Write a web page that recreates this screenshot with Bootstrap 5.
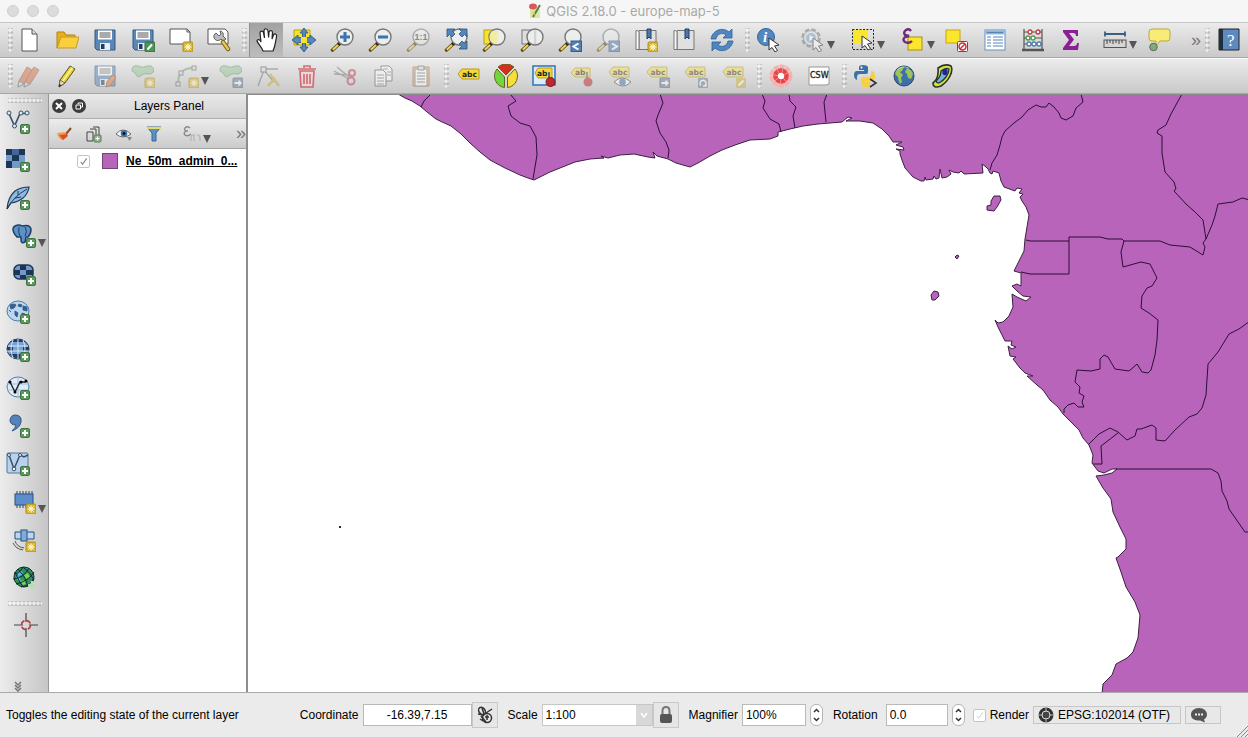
<!DOCTYPE html>
<html lang="en">
<head>
<meta charset="utf-8">
<meta name="viewport" content="width=device-width, initial-scale=1">
<title>QGIS 2.18.0 - europe-map-5</title>
<link rel="stylesheet" href="https://cdn.jsdelivr.net/npm/bootstrap@5.3.0/dist/css/bootstrap.min.css">
<style>
body{font:12px/16px "Liberation Sans",Arial,sans-serif;color:#000;background:#ebebeb}
.titlebar{height:22px;background:#f6f6f6;color:#a9a9a9;font:13px/22px Inter,sans-serif}
.lights{left:7px;top:5px;gap:8px}
.lights i{width:12px;height:12px;border-radius:50%;background:#dcdcdc;border:1px solid #cfcfcf}
.toolrow{height:36px;padding-left:10px;background:linear-gradient(#ebebeb,#c9c9c9);border-top:1px solid #fafafa;border-bottom:1px solid #a6a6a6;position:relative}
.toolrow.first{border-top-color:#c6c6c6}
.tool{width:38px;height:34px;padding:0;border:0;border-radius:0;flex:none;display:flex;align-items:center;justify-content:center;color:#555}
.tool svg{width:24px;height:24px;flex:none}
.tool.drop{width:50px;padding-left:13px;justify-content:flex-start}
.tool.drop::after{content:"";border:4px solid transparent;border-top:8px solid #555;border-bottom:0;margin:10px 0 0 2px}
.tool.held{width:34px;margin:0 2px;background:linear-gradient(#a2a2a2,#bdbdbd);border-left:1px solid #8f8f8f}
.tool.off svg{opacity:.5}
.tool.dim svg{opacity:.75}
.tool.more{width:23px;font-size:18px;color:#777;justify-content:flex-end}
.grip{width:9px;height:24px;flex:none;opacity:.6;background:radial-gradient(circle,#fff 1px,transparent 2px) 0 0/4px 5px,radial-gradient(circle,#aaa 1px,transparent 2px) 2px 2px/4px 5px;background-clip:content-box;padding-left:4px}
.grip.lead-in{position:absolute;left:4px}
.side{width:49px;background:linear-gradient(90deg,#ececec,#c6c6c6);border-right:1px solid #989898}
.side .grip{width:34px;height:5px;padding:0;margin:4px 0 0 8px}
.side .tool{height:38px;width:48px;padding-left:6px;justify-content:flex-start}
.side .tool.inset{padding-left:12px}
.side .tool.capture{padding-left:14px}
.side .tool.overflow-more{height:14px;margin-top:auto}
.side .tool.overflow-more svg{height:14px}
.side .drop::after{margin-top:14px}
.layers{width:199px;border-right:2px solid #8d8d8d}
.panelhead{height:25px;padding-left:3px;gap:6px;background:linear-gradient(#e9e9e9,#d2d2d2);border-bottom:1px solid #b0b0b0}
.roundbtn{width:14px;height:14px;padding:0;border:0;border-radius:50%;background:#3c3c3c;display:flex;align-items:center;justify-content:center;flex:none}
.paneltools{height:30px;background:linear-gradient(#ececec,#cbcbcb);border-bottom:1px solid #a4a4a4}
.paneltools .tool{width:30px;height:28px}
.paneltools .tool svg{width:18px;height:18px}
.paneltools .tool.drop{width:44px;padding-left:14px}
.tick{appearance:none;width:13px;height:13px;margin:0;border:1px solid #c4c4c4;border-radius:2px;background:#fff;flex:none}
.tick:checked{background:#fff url("data:image/svg+xml,%3Csvg xmlns='http://www.w3.org/2000/svg' viewBox='0 0 12 12'%3E%3Cpath d='M3 6.5 5 9 9.5 2.5' fill='none' stroke='%23888' stroke-width='1.3'/%3E%3C/svg%3E")}
.tick.faint:checked{background-image:url("data:image/svg+xml,%3Csvg xmlns='http://www.w3.org/2000/svg' viewBox='0 0 12 12'%3E%3Cpath d='M3 6.5 5 9 9.5 2.5' fill='none' stroke='%23ccc' stroke-width='1'/%3E%3C/svg%3E")}
.swatch{width:16px;height:16px;background:#b864bb;border:1px solid #6b4a6d;flex:none}
.layername{font-weight:700;text-decoration:underline;color:#000}
.map{background:#fff;border-top:1px solid #8d8d8d}
.status{height:45px;border-top:1px solid #a9a9a9;background:#ebebeb;padding:0 27px 0 6px}
.status .gap-before{margin-left:10px}
.field{height:22px;border:1px solid #b9b9b9;background:#fff;padding:0 3px;font-size:12px;border-radius:0;color:#000;flex:none}
.coord{width:109px}
.mag{width:64px}
.rot{width:62px}
.boxbtn{width:26px;height:26px;border:1px solid #c9c9c9;border-radius:0;padding:0;background:#e6e6e6;flex:none;display:flex;align-items:center;justify-content:center}
.scale{width:111px;appearance:none;border-color:#c6c6c6;background:#fff url("data:image/svg+xml,%3Csvg xmlns='http://www.w3.org/2000/svg' viewBox='0 0 16 20'%3E%3Cpath d='M0 0h16v20H0z' fill='%23d8d8d8'/%3E%3Cpath d='m5 8 3 4 3-4' fill='none' stroke='white' stroke-width='1.5'/%3E%3C/svg%3E") right/16px 20px no-repeat}
.step{width:13px;height:22px;border:1px solid #b5b5b5;border-radius:6px;background:#fff;padding:0;flex:none;display:flex;align-items:center;justify-content:center}
.chip{height:18px;border:1px solid #c6c6c6;border-radius:0;background:#e8e8e8;padding:0 4px;font-size:12px;line-height:16px;color:#000;flex:none}
.chip.crs{width:148px}
.chip.msg{width:36px}
.coast{fill:#b864bb;stroke:#3d1f45;stroke-width:1;stroke-linejoin:round}
.bord{fill:none;stroke:#2c0f35;stroke-width:1;stroke-linejoin:round}
.resize{right:0;bottom:0}
</style>
<script src="https://cdn.jsdelivr.net/npm/bootstrap@5.3.0/dist/js/bootstrap.bundle.min.js"></script>
</head>
<body class="vh-100 d-flex flex-column overflow-hidden">

<svg class="d-none" aria-hidden="true">
<defs>
<g id="b-plus"><rect x="14.500" y="14.500" width="9" height="9" rx="1.500" fill="#5a9a5c" stroke="#3d7440"/><path d="M19 16v6M16 19h6" stroke="#fff" stroke-width="2"/></g>
<g id="b-star"><rect x="14" y="14" width="10" height="10" rx="1.500" fill="#dcb62c" stroke="#a98a1c"/><path d="M19 15.500v7M15.500 19h7M16.500 16.500l5 5M21.500 16.500l-5 5" stroke="#fff" stroke-width="1"/><circle cx="19" cy="19" r="1.800" fill="#fff4b0"/></g>
<g id="b-arrow"><rect x="14" y="14" width="10" height="10" rx="1" fill="#6d8296" stroke="#4d5c6a"/><path d="M15.500 18h4v-2.500L23 19l-3.500 3.500V20h-4z" fill="#fff"/></g>
<g id="lens"><path d="M9 16 2.500 22" stroke="#5d4a16" stroke-width="3.600" stroke-linecap="round"/><path d="M8 17 2.800 21.800" stroke="#f3d354" stroke-width="2"/><path d="m8.500 16.500 2-2" stroke="#222" stroke-width="3.500"/><circle cx="15" cy="9" r="8" fill="#eef0f0" fill-opacity=".88" stroke="#777" stroke-width="1.400"/></g>
<g id="disk"><path d="M2 2h20v20H4l-2-2z" fill="#5b87b8" stroke="#33587f"/><rect x="5" y="2.500" width="14" height="9" fill="#fff"/><path d="M6.500 5h11M6.500 7h11M6.500 9h11" stroke="#555"/><rect x="7" y="15" width="10" height="7" fill="#e8eef3"/><rect x="8" y="16" width="3.500" height="5" fill="#223d5c"/></g>
<g id="pen"><path d="M5 16 15 2l5 3L10 19l-6 4z" fill="#e3cf38" stroke="#5b5523"/><path d="M7.500 17.500 17.500 3.500" stroke="#fff48a" stroke-width="1.500"/><path d="m5 16 5 3-6 4z" fill="#ead7b0" stroke="#555" stroke-width=".8"/><path d="m4.500 20 2 1.200L4 23z" fill="#222"/></g>
<g id="cursor"><path d="M12 10v12l3-2.500 3 4.500 2.500-1.500-3-4.500 4.500-1z" fill="#fff" stroke="#333"/></g>
<g id="blob"><path d="M1 6c0-5 5-5 9-3 3 1 6-2 10-1 4 2 3 8-1 8-4 0-6-1-8 1-4 3-6 1-6-1-1-3-4-1-4-4z" fill="#98c79b" stroke="#5f9665"/></g>
<g id="tag"><path d="M2 12 6 7h17v10H6z" fill="#f5d934" stroke="#b79a20"/><text x="6" y="15" font-family="DejaVu Sans" font-size="7.500" font-weight="700" fill="#222">abc</text></g>
<g id="tag-s"><path d="M1 8 5 3h16v10H5z" fill="#f0dc55" stroke="#b79a20"/><text x="4.500" y="11" font-family="DejaVu Sans" font-size="7.500" font-weight="700" fill="#333">abc</text></g>
<g id="vee"><path d="M3 4.500 8.500 17 14 4.500h7" fill="none" stroke="#38536f" stroke-width="1.700"/><g fill="#dce8f2" stroke="#38536f"><circle cx="3" cy="4" r="2"/><circle cx="8.500" cy="17" r="2"/><circle cx="15" cy="4" r="2"/><circle cx="21" cy="4" r="2"/></g></g>

<symbol id="new" viewBox="0 0 24 24"><path d="M5 1h10l5 5v17H5z" fill="#fff" stroke="#555"/><path d="M15 1v5h5" fill="#ddd" stroke="#555"/></symbol>
<symbol id="open" viewBox="0 0 24 24"><path d="M2 20V4h7l2 3h9v3H6z" fill="#e8ae1e" stroke="#b28316"/><path d="M2 20 6 9h18l-3 11z" fill="#f8cf3d" stroke="#c89a20"/></symbol>
<symbol id="save" viewBox="0 0 24 24"><use href="#disk"/></symbol>
<symbol id="saveas" viewBox="0 0 24 24"><use href="#disk"/><rect x="14" y="14" width="10" height="10" rx="1.500" fill="#4f9557" stroke="#2d6535"/><path d="m16.500 21.500 4.500-5" stroke="#fff" stroke-width="2"/></symbol>
<symbol id="composer" viewBox="0 0 24 24"><path d="M1 1h17l3 3v12H1z" fill="#fff" stroke="#555"/><path d="M18 1v3h3" fill="none" stroke="#555"/><use href="#b-star"/></symbol>
<symbol id="manager" viewBox="0 0 24 24"><path d="M1 1h17l3 3v12H1z" fill="#fff" stroke="#555"/><path d="M9 5a4 4 0 1 0 5 6l2 2 3-2-3-3c1-3-1-5-3-5l1 3-2 2z" fill="#bbb" stroke="#555" stroke-width=".9"/><path d="m16 14 5 7" stroke="#77601a" stroke-width="4.500" stroke-linecap="round"/><path d="m16 14 5 7" stroke="#e8c84c" stroke-width="2.500" stroke-linecap="round"/></symbol>
<symbol id="hand" viewBox="0 0 24 24"><path d="M8 23c-1-4-5-7-6-10 0-2 3-2 4 1L5 5c0-2 3-3 3.500 0l1 5L9 3c0-3 3.500-3 4 0l.6 6.500L14 4c.5-2 3.500-2 3.500.5L17 11l1.500-4c1-2 3.500-1 3 1.500-1 5-1 9-3.500 14.500z" fill="#fff" stroke="#222" stroke-width="1.200"/></symbol>
<symbol id="pansel" viewBox="0 0 24 24"><path d="M2 2h16v15H2z" fill="#f8e32c" stroke="#b9a210"/><path d="M12 0 8 5h2.500v4.500H6V7L0 12l6 5v-2.500h4.500V19H8l4 5 4-5h-2.500v-4.500H18V17l6-5-6-5v2.500h-4.500V5H16z" fill="#5788bd" stroke="#29507f" stroke-width=".8"/><rect x="9" y="9" width="6" height="6" fill="#f8e32c"/></symbol>
<symbol id="zin" viewBox="0 0 24 24"><use href="#lens"/><path d="M15 4v10M10 9h10" stroke="#3f73ae" stroke-width="3"/></symbol>
<symbol id="zout" viewBox="0 0 24 24"><use href="#lens"/><path d="M10 9h10" stroke="#3f73ae" stroke-width="3"/></symbol>
<symbol id="zone" viewBox="0 0 24 24"><use href="#lens"/><text x="8.500" y="12" font-family="Liberation Sans" font-size="9" font-weight="700" fill="#333">1:1</text></symbol>
<symbol id="zfull" viewBox="0 0 24 24"><use href="#lens"/><path d="M3 1h8L8.500 3.500 11 6 8 9 5.500 6.500 3 9zM23 1v8l-2.500-2.500L18 9l-3-3 2.500-2.500L15 1zM23 21h-8l2.500-2.500L15 16l3-3 2.500 2.500L23 13z" fill="#5585b9" stroke="#29507f" stroke-width=".8"/></symbol>
<symbol id="zsel" viewBox="0 0 24 24"><rect x="2" y="2" width="14" height="14" fill="#f8e32c" stroke="#b9a210"/><use href="#lens"/><path d="M10 3h5v13h-3c-5-2-6-9-2-13z" fill="#f2eca0"/></symbol>
<symbol id="zlayer" viewBox="0 0 24 24"><rect x="2" y="2" width="14" height="14" fill="#ddd" stroke="#777"/><use href="#lens"/><path d="M15 3v13" stroke="#bbb"/></symbol>
<symbol id="zlast" viewBox="0 0 24 24"><use href="#lens"/><rect x="13" y="13" width="10.500" height="10.500" fill="#5580b4" stroke="#365d8b"/><path d="m20.500 15.500-5 3 5 3" fill="none" stroke="#fff" stroke-width="2"/></symbol>
<symbol id="znext" viewBox="0 0 24 24"><use href="#lens"/><rect x="13" y="13" width="10.500" height="10.500" fill="#5580b4" stroke="#365d8b"/><path d="m16 15.500 5 3-5 3" fill="none" stroke="#fff" stroke-width="2"/></symbol>
<symbol id="bm" viewBox="0 0 24 24"><path d="M5 2.500h17v19H5z" fill="#e0e0e0" stroke="#777"/><path d="M2 2.500c3 0 3 2 3 3v16H2z" fill="#f8f8f8" stroke="#777"/><path d="M13 1h4v10l-2-2-2 2z" fill="#4c77ab" stroke="#223f65"/></symbol>
<symbol id="bmnew" viewBox="0 0 24 24"><use href="#bm"/><use href="#b-star"/></symbol>
<symbol id="refresh" viewBox="0 0 24 24"><path d="M1 11C2 3 12-2 19 4l3-3v9h-9l3-3C12 4 7 6 6 11zM23 13c-1 8-11 13-18 7l-3 3v-9h9l-3 3c4 3 9 1 10-4z" fill="#4f86c0" stroke="#2f6298" stroke-width=".8"/></symbol>
<symbol id="info" viewBox="0 0 24 24"><circle cx="9" cy="9" r="8.500" fill="#5287bf" stroke="#36669b"/><text x="6" y="14" font-family="Liberation Serif" font-size="15" font-style="italic" font-weight="700" fill="#fff">i</text><use href="#cursor"/></symbol>
<symbol id="action" viewBox="0 0 24 24"><circle cx="10" cy="10" r="8.500" fill="none" stroke="#777" stroke-width="2.500" stroke-dasharray="4.500 2.200"/><circle cx="10" cy="10" r="7.500" fill="#d8e2eb" stroke="#777"/><circle cx="10" cy="10" r="5" fill="#7da3c8"/><path d="m8.500 7 5 3-5 3z" fill="#fff"/><use href="#cursor"/></symbol>
<symbol id="select" viewBox="0 0 24 24"><rect x="2" y="2" width="15" height="14" fill="#fbe62e"/><rect x="1.500" y="1.500" width="21" height="20" fill="none" stroke="#222" stroke-dasharray="2 1.500"/><use href="#cursor" x="-1" y="-2"/></symbol>
<symbol id="expr" viewBox="0 0 24 24"><rect x="7" y="9" width="14" height="13" fill="#fbe62e" stroke="#aa910c"/><path d="M10 3Q8 0 5 2 2 4 4 7l4 1-4 1q-3 3 0 5 4 2 7-1" fill="none" stroke="#6b2b78" stroke-width="2.400"/></symbol>
<symbol id="desel" viewBox="0 0 24 24"><rect x="1" y="2" width="14" height="13" fill="#fbe62e" stroke="#d0a10c"/><rect x="12.500" y="13.500" width="10" height="10" rx="1" fill="#fff" stroke="#c3262c"/><circle cx="17.500" cy="18.500" r="3.500" fill="none" stroke="#d22a30" stroke-width="1.500"/><path d="m15 21 5-5" stroke="#d22a30" stroke-width="1.500"/></symbol>
<symbol id="table" viewBox="0 0 24 24"><rect x="2" y="2" width="20" height="20" fill="#fff" stroke="#5e92ca"/><path d="M2.500 2.500h19v4h-19z" fill="#8db5df"/><path d="M4 9h4M10 9h10M4 12h4M10 12h10M4 15h4M10 15h10M4 18h4M10 18h10M4 4.500h16" stroke="#5683b3" stroke-width="1.200"/></symbol>
<symbol id="abacus" viewBox="0 0 24 24"><path d="M3 1v21M21 1v21M3 4h18M3 10h18M3 16h18" stroke="#555" stroke-width="1.200"/><path d="M1 22h22" stroke="#555" stroke-width="2.500"/><g fill="#fff" stroke-width="1.300"><g stroke="#c4383c"><circle cx="9" cy="4" r="2"/><circle cx="17" cy="4" r="2"/></g><g stroke="#4a9b50"><circle cx="7" cy="10" r="2"/><circle cx="12" cy="10" r="2"/></g><g stroke="#4b7bb0"><circle cx="8" cy="16" r="2"/><circle cx="13" cy="16" r="2"/><circle cx="18" cy="16" r="2"/></g></g></symbol>
<symbol id="sigma" viewBox="0 0 24 24"><path d="M4 2h15v6h-2c0-2-1-3-3-3h-4l5 6.500L10 18h5c2 0 3-1 3-3h2l-1 7H4v-2l6-8-6-8z" fill="#8c1f95"/></symbol>
<symbol id="measure" viewBox="0 0 24 24"><path d="M2 6h20M2 3.500v5M22 3.500v5" stroke="#3b5f80" stroke-width="1.800"/><rect x="1" y="12" width="22" height="7.500" fill="#d5d5d5" stroke="#555"/><path d="M4 12v4M7 12v3M10 12v4M13 12v3M16 12v4M19 12v3" stroke="#444"/></symbol>
<symbol id="tip" viewBox="0 0 24 24"><path d="M5 1h16q2 0 2 3v6q0 3-3 3h-7l-4 5v-5H5q-3 0-3-3V4q0-3 3-3z" fill="#f8ec78" stroke="#bda73a"/><circle cx="6.500" cy="19" r="3.800" fill="#84a77d" stroke="#53774e"/></symbol>
<symbol id="help" viewBox="0 0 24 24"><path d="M2 1h20v21H2z" fill="#5d8bc0" stroke="#222"/><path d="M2 1h4v21H2z" fill="#1f2e40"/><text x="10" y="18" font-family="Liberation Serif" font-size="17" fill="#fff">?</text></symbol>

<symbol id="edits" viewBox="0 0 24 24"><g fill="#e0703a" stroke="#7a655b"><path d="M2 17 10 3l5 3L7 20l-6 3z"/><path d="M8 18 17 3l5 3-9 14-6 3z"/></g><path d="m2 17 5 3-6 3zM8 18l5 2-6 3z" fill="#ddd" stroke="#777"/></symbol>
<symbol id="pencil" viewBox="0 0 24 24"><use href="#pen"/></symbol>
<symbol id="saveedit" viewBox="0 0 24 24"><use href="#disk"/><path d="m14 18 5-7 4 2-5 8-5 2z" fill="#e8773c" stroke="#994a22"/></symbol>
<symbol id="addfeat" viewBox="0 0 24 24"><use href="#blob"/><use href="#b-star"/></symbol>
<symbol id="curve" viewBox="0 0 24 24"><path d="M3 20C3 9 8 4 18 4" fill="none" stroke="#6fa877" stroke-width="1.800"/><g fill="#ddd" stroke="#666"><rect x="1" y="18" width="4" height="4"/><rect x="4" y="7" width="4" height="4"/><rect x="17" y="2" width="4" height="4"/></g><use href="#b-star"/></symbol>
<symbol id="movefeat" viewBox="0 0 24 24"><use href="#blob"/><use href="#b-arrow"/></symbol>
<symbol id="node" viewBox="0 0 24 24"><path d="M7 6 1 22M7 5h14M7 6l10 12" stroke="#777" stroke-width="1.400"/><rect x="4" y="3" width="5" height="5" fill="#ddd" stroke="#555"/><path d="m11 22 7-8M13 10l9 12" stroke="#c8ac32" stroke-width="2.500"/></symbol>
<symbol id="trash" viewBox="0 0 24 24"><path d="M5 7h14l-1 16H6z" fill="#f3d6d7" stroke="#c9474e" stroke-width="1.600"/><path d="M3 5h18M9 4V2h6v2M9 10v10M12 10v10M15 10v10" fill="none" stroke="#c9474e" stroke-width="1.600"/></symbol>
<symbol id="cut" viewBox="0 0 24 24"><path d="m1 7 15 8M4 3l12 10M1 10l15 1" stroke="#777" stroke-width="1.400"/><circle cx="19" cy="9" r="3" fill="none" stroke="#bb3e53" stroke-width="2"/><circle cx="18" cy="17" r="3.500" fill="none" stroke="#bb3e53" stroke-width="2"/></symbol>
<symbol id="copy" viewBox="0 0 24 24"><path d="M10 2h8l3 3v12H10z" fill="#fff" stroke="#555"/><path d="M4 6h8l3 3v13H4z" fill="#fff" stroke="#555"/><path d="M6 11h7M6 14h7M6 17h7M6 20h7M12 5h5M16 8h4M16 11h4" stroke="#777"/></symbol>
<symbol id="paste" viewBox="0 0 24 24"><path d="M4 3h16v19H4z" fill="#d7bc8f" stroke="#b5651d"/><path d="M6 5h12v17H6z" fill="#fff" stroke="#777"/><path d="M9 2h6v4H9zM8 9h8M8 12h8M8 15h8M8 18h8" fill="#ddd" stroke="#666"/></symbol>
<symbol id="label" viewBox="0 0 24 24"><use href="#tag" y="-2"/></symbol>
<symbol id="pie" viewBox="0 0 24 24"><g stroke="#6b6220"><path d="M12 11 4 3a12 12 0 0 1 16 0z" fill="#d92c20"/><path d="M10.500 13v10.500A11.500 11.500 0 0 1 3 5z" fill="#6fd63b"/><path d="M13.500 13v10.500A11.500 11.500 0 0 0 21 5z" fill="#f6df36"/></g></symbol>
<symbol id="pinhl" viewBox="0 0 24 24"><rect x="1" y="2" width="22" height="19" fill="#dcecfa" stroke="#2d73b9" stroke-width="1.500"/><path d="m3 9 3-5h14v10H6z" fill="#f5d934" stroke="#b79a20"/><text x="5" y="12" font-family="DejaVu Sans" font-size="7.500" font-weight="700" fill="#222">ab</text><path d="M17 8v9" stroke="#666" stroke-width="2"/><circle cx="18.500" cy="18" r="4.500" fill="#bd2730" stroke="#7e1820"/></symbol>
<symbol id="pin" viewBox="0 0 24 24"><path d="M1 9 5 4h15v9H5z" fill="#f0dc55" stroke="#b79a20"/><text x="5" y="11" font-family="DejaVu Sans" font-size="7.500" font-weight="700" fill="#222">ab</text><path d="M17 8v9" stroke="#666" stroke-width="2"/><circle cx="18" cy="18" r="4.500" fill="#bd2730"/></symbol>
<symbol id="lshow" viewBox="0 0 24 24"><use href="#tag-s"/><path d="M6 18q8-8 17 0-8 8-17 0z" fill="#fff" stroke="#444"/><circle cx="14.500" cy="18" r="3.300" fill="#4a7aaa"/></symbol>
<symbol id="lmove" viewBox="0 0 24 24"><use href="#tag-s"/><use href="#b-arrow"/></symbol>
<symbol id="lrot" viewBox="0 0 24 24"><use href="#tag-s"/><rect x="14" y="14" width="10" height="10" rx="1" fill="#6d8296"/><path d="M17 21.500a3 3 0 1 1 4 0M22 19v3h-3" fill="none" stroke="#fff" stroke-width="1.400"/></symbol>
<symbol id="ledit" viewBox="0 0 24 24"><use href="#tag-s"/><rect x="14" y="14" width="10" height="10" rx="1" fill="#d0b440"/><path d="m16.500 21.500 5-5" stroke="#fff" stroke-width="2"/></symbol>
<symbol id="flower" viewBox="0 0 24 24"><circle cx="12" cy="12" r="9" fill="none" stroke="#f7b0b0" stroke-width="5" stroke-dasharray="5 .8"/><circle cx="12" cy="12" r="5.500" fill="none" stroke="#e5484a" stroke-width="4.500" stroke-dasharray="4 .5"/><circle cx="12" cy="12" r="3" fill="#fff"/></symbol>
<symbol id="csw" viewBox="0 0 24 24"><path d="M2 3h20v17l-3 1H2z" fill="#fff" stroke="#999"/><text x="3" y="14" font-family="DejaVu Sans" font-size="8" fill="#222" stroke="#222" stroke-width=".3">CSW</text></symbol>
<symbol id="python" viewBox="0 0 24 24"><path d="M5 6V3q0-2 4-2t5 2v5q0 2-3 2H6q-3 0-3 3v3Q0 15 0 11t3-4h7V6z" fill="#3a72a8"/><path d="M17 7q4 0 4 5t-3 5h-7v1h5v3q0 2-4 2t-5-2v-5q0-3 3-3h4q3 0 3-3z" fill="#f6cf42"/><circle cx="7.500" cy="3.500" r="1" fill="#fff"/><path d="m16 15 6 4-6 4" fill="none" stroke="#333" stroke-width="1.600"/></symbol>
<symbol id="earth" viewBox="0 0 24 24"><circle cx="12" cy="12" r="10" fill="#3d6fa9" stroke="#2a4a6c"/><path d="M4 7q5-5 8-4l-2 4-2 1 3 3-2 3 1 4-2 2Q6 16 6 13L3 10zM15 4q5 2 6 6l-2 5-3-1-1-4-2-2z" fill="#9cc35c"/><path d="M5 6q5-5 12-2" stroke="#fff" stroke-opacity=".5" fill="none"/></symbol>
<symbol id="contour" viewBox="0 0 24 24"><path d="M8 4q7-5 13-2 2 4-1 10t-9 10q-8 3-8-3 6-4 5-15z" fill="#d8e23c" stroke="#26352a" stroke-width="1.600"/><path d="M11 7q5-4 8-2 0 4-3 8t-7 6q-4 0-2-3 4-4 4-9z" fill="#79aede" stroke="#26352a" stroke-width="1.300"/><ellipse cx="15" cy="8" rx="2.600" ry="3.200" fill="#1c2695"/></symbol>

<symbol id="s-vector" viewBox="0 0 24 24"><use href="#vee" y="-1"/><use href="#b-plus"/></symbol>
<symbol id="s-raster" viewBox="0 0 24 24"><path d="M0 1h19v19H0z" fill="#6f9acb"/><path d="M0 1h6v6H0zM13 1h6v6h-6zM6 7h7v6H6zM0 13h6v7H0z" fill="#1f3556"/><path d="M6 1h7v6H6z" fill="#3f679b"/><use href="#b-plus"/></symbol>
<symbol id="s-feather" viewBox="0 0 24 24"><path d="M1 23Q2 11 9 5q6-4 14-4-1 7-6 11t-12 5z" fill="#8db8e2" stroke="#1f3b58" stroke-width="1.200"/><path d="M1 23Q7 11 21 3M9 12l6-1M12 9V5" fill="none" stroke="#1f3b58"/><use href="#b-plus"/></symbol>
<symbol id="s-pg" viewBox="0 0 24 24"><path d="M3 2q4-2 7 0 8-2 9 3 0 5-3 8h-2l-1 5q-4 2-4-2v-3H5Q1 9 1 5q0-2 2-3z" fill="#5c91c8" stroke="#1f3f66" stroke-width="1.500"/><path d="M7 3q-1 6 1 9M13 3q3 4 0 9" fill="none" stroke="#1f3f66"/><use href="#b-plus"/></symbol>
<symbol id="s-ms" viewBox="0 0 24 24"><rect x="2" y="3" width="19" height="14" rx="5" fill="#6f9acb" stroke="#1f3556" stroke-width="1.500"/><path d="M8 3h6v5H8zM2 8h6v5H2zM14 8h7v5h-7zM8 13h6v4H8z" fill="#1f3556"/><use href="#b-plus"/></symbol>
<symbol id="s-wms" viewBox="0 0 24 24"><ellipse cx="12" cy="11" rx="11" ry="10" fill="#bcd6ef" stroke="#4c7dae"/><path d="M4 5l4-1 2 1-2 3-3 1zM13 4l3 1-1 2-3-1zM17 6l4 1v4l-4-1zM9 11l3 2-1 4-2-2zM3 10l2 2M16 13l3 1-1 2-2-1z" fill="#34618f" stroke="#34618f"/><use href="#b-plus"/></symbol>
<symbol id="s-wcs" viewBox="0 0 24 24"><ellipse cx="12" cy="11" rx="11" ry="10" fill="#76a3d3" stroke="#223f65"/><path d="M4 4Q12-2 20 4zM1 9h6v4H1zM17 9h6v4h-6zM3 16h18q-7 9-18 0z" fill="#223f65"/><path d="M2 8h20M1 13h22M12 1v20M7 2Q3 11 7 20M17 2q4 9 0 18" fill="none" stroke="#d9e8f6"/><use href="#b-plus"/></symbol>
<symbol id="s-wfs" viewBox="0 0 24 24"><ellipse cx="12" cy="11" rx="11" ry="10" fill="#dfebf6" stroke="#4c7dae"/><path d="M1 8h22M1 14h22M12 1v20" stroke="#9dbfe0"/><path d="m4 6 5 10 5-10h6" fill="none" stroke="#222" stroke-width="1.400"/><circle cx="4" cy="6" r="1.500"/><circle cx="9" cy="16" r="1.500"/><circle cx="15" cy="6" r="1.500"/><circle cx="20" cy="5" r="1.500"/><use href="#b-plus"/></symbol>
<symbol id="s-csv" viewBox="0 0 24 24"><path d="M9 1q7 0 6 7-1 6-9 9 4-4 4-6-6 0-6-5 1-5 5-5z" fill="#5682b8" stroke="#2f5688"/><use href="#b-plus"/></symbol>
<symbol id="s-virt" viewBox="0 0 24 24"><rect x="1" y="1" width="21" height="20" rx="1" fill="#b9d1ea" stroke="#55779c"/><path d="m3 3 5 14 6-14 4 2 4-2" fill="none" stroke="#34516f" stroke-width="1.500"/><g fill="#fff" stroke="#34516f"><circle cx="3" cy="3" r="1.500"/><circle cx="8" cy="17" r="1.800"/><circle cx="14" cy="3" r="1.500"/></g><use href="#b-plus"/></symbol>
<symbol id="s-mem" viewBox="0 0 24 24"><path d="M5 1v17M8 1v17M11 1v17M14 1v17M17 1v17M20 1v15" stroke="#345" stroke-width="1"/><rect x="3" y="4" width="18" height="11" fill="#5c8fc9" stroke="#2b4f7c"/><use href="#b-star"/></symbol>
<symbol id="s-gps" viewBox="0 0 24 24"><path d="M3 4h19v7H3z" fill="#b9d5ef" stroke="#2b4f7c"/><rect x="9" y="2" width="6" height="11" fill="#7facd9" stroke="#2b4f7c"/><path d="M3 13q2 6 9 7M1 15q3 6 10 7" fill="none" stroke="#555"/><use href="#b-star"/></symbol>
<symbol id="s-green" viewBox="0 0 24 24"><circle cx="12" cy="11" r="10" fill="#2e8f58" stroke="#11332a"/><path d="m6 6 4-1 1 4-5 1zM4 11l3-1 2 4-3 1z" fill="#5dbbe8"/><path d="m12 9 4-2 2 4-4 2zM8 15l4-1 2 4-3 1z" fill="#76d84e"/><path d="M2 7q5 2 9-6M1 13Q12 12 17 2M4 18Q17 15 22 6M9 21q10-2 13-9M6 3q8 8 10 17M3 6q4 10 8 15M11 1q8 6 11 13" fill="none" stroke="#102a3c"/><path d="M20 15v8M16 19h8" stroke="#b5dfae" stroke-width="2.500"/></symbol>
<symbol id="s-cross" viewBox="0 0 24 24"><path d="M12 0v9M12 15v9M0 12h9M15 12h9" stroke="#444" stroke-width="1.200"/><circle cx="12" cy="12" r="4.500" fill="none" stroke="#b3383b" stroke-width="1.500" stroke-dasharray="5 2"/></symbol>

<symbol id="p-brush" viewBox="0 0 18 18"><path d="m11 9 5-6" stroke="#8d4b22" stroke-width="2"/><path d="M2 8l8-1 3 4-5 4q-5-1-6-7z" fill="#f0a04c"/><path d="m4 10 8-1 1 2-5 4z" fill="#d8502f"/></symbol>
<symbol id="p-group" viewBox="0 0 18 18"><path d="M2 7h6v9H2zM5 4h6v9M8 2h6v10" fill="none" stroke="#444"/><rect x="9" y="10" width="7" height="7" rx="1" fill="#8fb48b" stroke="#587d55"/><path d="M12.500 11.500v4M10.500 13.500h4" stroke="#fff"/></symbol>
<symbol id="p-eye" viewBox="0 0 18 18"><path d="M1 9q7-8 15 0-8 6-15 0z" fill="#fff" stroke="#666"/><circle cx="9" cy="8.500" r="3.300" fill="#3f719f"/><circle cx="9" cy="8.500" r="1.300"/><path d="m12 12 5 0-2.500 4z" fill="#888"/></symbol>
<symbol id="p-filter" viewBox="0 0 18 18"><path d="M2 2h14l-5 6v8H7V8z" fill="#5c8fc6" stroke="#3c668f"/><path d="M2 2h14v2H2z" fill="#dfdb6c"/></symbol>
<symbol id="p-eps" viewBox="0 0 18 18"><path d="M7 3Q5 1 3 2 0 4 3 6h2-2q-3 2-1 4 3 2 6-1" fill="none" stroke="#888" stroke-width="1.500"/><path d="M8 16v-3q0-3 3-3v6M14 10q3 0 3 3v3" fill="none" stroke="#bbb" stroke-width="1.500"/></symbol>
</defs>
</svg>

<header class="titlebar position-relative d-flex align-items-center justify-content-center flex-shrink-0">
  <div class="lights position-absolute d-flex"><i></i><i></i><i></i></div>
  <svg width="14" height="16" viewBox="0 0 14 16" class="me-1" aria-hidden="true"><path d="M2 6h10v9H2z" fill="#d8e9a8"/><path d="m5 14 7-12" stroke="#5b7d3c" stroke-width="2"/><ellipse cx="5" cy="3.500" rx="4" ry="3" fill="#d65a5c"/><path d="m3 12 2-4 3 6" stroke="#e9d66a" fill="none"/></svg>
  <span>QGIS 2.18.0 - europe-map-5</span>
</header>

<nav class="toolrow first d-flex align-items-center flex-shrink-0" aria-label="Project and map tools">
  <span class="grip lead-in"></span>
  <button class="btn tool" aria-label="New project"><svg><use href="#new"/></svg></button>
  <button class="btn tool" aria-label="Open project"><svg><use href="#open"/></svg></button>
  <button class="btn tool" aria-label="Save project"><svg><use href="#save"/></svg></button>
  <button class="btn tool" aria-label="Save project as"><svg><use href="#saveas"/></svg></button>
  <button class="btn tool" aria-label="New print composer"><svg><use href="#composer"/></svg></button>
  <button class="btn tool" aria-label="Composer manager"><svg><use href="#manager"/></svg></button>
  <span class="grip"></span>
  <button class="btn tool held" aria-label="Pan map" aria-pressed="true"><svg><use href="#hand"/></svg></button>
  <button class="btn tool" aria-label="Pan to selection"><svg><use href="#pansel"/></svg></button>
  <button class="btn tool" aria-label="Zoom in"><svg><use href="#zin"/></svg></button>
  <button class="btn tool" aria-label="Zoom out"><svg><use href="#zout"/></svg></button>
  <button class="btn tool off" aria-label="Zoom to native resolution"><svg><use href="#zone"/></svg></button>
  <button class="btn tool" aria-label="Zoom full"><svg><use href="#zfull"/></svg></button>
  <button class="btn tool" aria-label="Zoom to selection"><svg><use href="#zsel"/></svg></button>
  <button class="btn tool" aria-label="Zoom to layer"><svg><use href="#zlayer"/></svg></button>
  <button class="btn tool" aria-label="Zoom last"><svg><use href="#zlast"/></svg></button>
  <button class="btn tool off" aria-label="Zoom next"><svg><use href="#znext"/></svg></button>
  <button class="btn tool" aria-label="New bookmark"><svg><use href="#bmnew"/></svg></button>
  <button class="btn tool" aria-label="Show bookmarks"><svg><use href="#bm"/></svg></button>
  <button class="btn tool" aria-label="Refresh"><svg><use href="#refresh"/></svg></button>
  <span class="grip"></span>
  <button class="btn tool" aria-label="Identify features"><svg><use href="#info"/></svg></button>
  <button class="btn tool drop off" aria-label="Run feature action"><svg><use href="#action"/></svg></button>
  <button class="btn tool drop" aria-label="Select features"><svg><use href="#select"/></svg></button>
  <button class="btn tool drop" aria-label="Select by expression"><svg><use href="#expr"/></svg></button>
  <button class="btn tool" aria-label="Deselect all"><svg><use href="#desel"/></svg></button>
  <button class="btn tool" aria-label="Open attribute table"><svg><use href="#table"/></svg></button>
  <button class="btn tool" aria-label="Field calculator"><svg><use href="#abacus"/></svg></button>
  <button class="btn tool" aria-label="Statistical summary"><svg><use href="#sigma"/></svg></button>
  <button class="btn tool drop" aria-label="Measure"><svg><use href="#measure"/></svg></button>
  <button class="btn tool" aria-label="Map tips"><svg><use href="#tip"/></svg></button>
  <button class="btn tool more" aria-label="More tools">»</button>
  <span class="grip ms-auto"></span>
  <button class="btn tool" aria-label="Help"><svg><use href="#help"/></svg></button>
</nav>

<nav class="toolrow d-flex align-items-center flex-shrink-0" aria-label="Digitizing and label tools">
  <span class="grip lead-in"></span>
  <button class="btn tool off" aria-label="Current edits"><svg><use href="#edits"/></svg></button>
  <button class="btn tool" aria-label="Toggle editing"><svg><use href="#pencil"/></svg></button>
  <button class="btn tool off" aria-label="Save layer edits"><svg><use href="#saveedit"/></svg></button>
  <button class="btn tool off" aria-label="Add feature"><svg><use href="#addfeat"/></svg></button>
  <button class="btn tool drop off" aria-label="Add circular string"><svg><use href="#curve"/></svg></button>
  <button class="btn tool off" aria-label="Move feature"><svg><use href="#movefeat"/></svg></button>
  <button class="btn tool off" aria-label="Node tool"><svg><use href="#node"/></svg></button>
  <button class="btn tool dim" aria-label="Delete selected"><svg><use href="#trash"/></svg></button>
  <button class="btn tool off" aria-label="Cut features"><svg><use href="#cut"/></svg></button>
  <button class="btn tool off" aria-label="Copy features"><svg><use href="#copy"/></svg></button>
  <button class="btn tool off" aria-label="Paste features"><svg><use href="#paste"/></svg></button>
  <span class="grip"></span>
  <button class="btn tool" aria-label="Layer labeling options"><svg><use href="#label"/></svg></button>
  <button class="btn tool" aria-label="Layer diagram options"><svg><use href="#pie"/></svg></button>
  <button class="btn tool" aria-label="Highlight pinned labels"><svg><use href="#pinhl"/></svg></button>
  <button class="btn tool off" aria-label="Pin labels"><svg><use href="#pin"/></svg></button>
  <button class="btn tool off" aria-label="Show or hide labels"><svg><use href="#lshow"/></svg></button>
  <button class="btn tool off" aria-label="Move label"><svg><use href="#lmove"/></svg></button>
  <button class="btn tool off" aria-label="Rotate label"><svg><use href="#lrot"/></svg></button>
  <button class="btn tool off" aria-label="Change label"><svg><use href="#ledit"/></svg></button>
  <span class="grip"></span>
  <button class="btn tool" aria-label="Interpolation plugin"><svg><use href="#flower"/></svg></button>
  <button class="btn tool" aria-label="Catalogue search"><svg><use href="#csw"/></svg></button>
  <span class="grip"></span>
  <button class="btn tool" aria-label="Python console"><svg><use href="#python"/></svg></button>
  <button class="btn tool" aria-label="Web map"><svg><use href="#earth"/></svg></button>
  <button class="btn tool" aria-label="Contour plugin"><svg><use href="#contour"/></svg></button>
</nav>

<main class="d-flex flex-grow-1 overflow-hidden">
  <nav class="side d-flex flex-column flex-shrink-0" aria-label="Manage layers">
    <span class="grip"></span>
    <button class="btn tool" aria-label="Add vector layer"><svg><use href="#s-vector"/></svg></button>
    <button class="btn tool" aria-label="Add raster layer"><svg><use href="#s-raster"/></svg></button>
    <button class="btn tool" aria-label="Add SpatiaLite layer"><svg><use href="#s-feather"/></svg></button>
    <button class="btn tool inset drop" aria-label="Add PostGIS layer"><svg><use href="#s-pg"/></svg></button>
    <button class="btn tool inset" aria-label="Add raster database layer"><svg><use href="#s-ms"/></svg></button>
    <button class="btn tool" aria-label="Add WMS layer"><svg><use href="#s-wms"/></svg></button>
    <button class="btn tool" aria-label="Add WCS layer"><svg><use href="#s-wcs"/></svg></button>
    <button class="btn tool" aria-label="Add WFS layer"><svg><use href="#s-wfs"/></svg></button>
    <button class="btn tool" aria-label="Add delimited text layer"><svg><use href="#s-csv"/></svg></button>
    <button class="btn tool" aria-label="Add virtual layer"><svg><use href="#s-virt"/></svg></button>
    <button class="btn tool inset drop" aria-label="New memory layer"><svg><use href="#s-mem"/></svg></button>
    <button class="btn tool inset" aria-label="GPS tools"><svg><use href="#s-gps"/></svg></button>
    <button class="btn tool inset" aria-label="Add globe layer"><svg><use href="#s-green"/></svg></button>
    <span class="grip"></span>
    <button class="btn tool capture" aria-label="Coordinate capture"><svg><use href="#s-cross"/></svg></button>
    <button class="btn tool overflow-more" aria-label="More layer tools"><svg viewBox="0 0 24 14"><path d="m9 4 3 3 3-3M9 7l3 3 3-3M9 10l3 3 3-3" fill="none" stroke="#777" stroke-width="1.500"/></svg></button>
  </nav>

  <aside class="layers d-flex flex-column flex-shrink-0 bg-white">
    <div class="panelhead d-flex align-items-center flex-shrink-0">
      <button class="roundbtn" aria-label="Close panel"><svg width="8" height="8" viewBox="0 0 8 8"><path d="m1 1 6 6M7 1 1 7" stroke="#fff" stroke-width="2"/></svg></button>
      <button class="roundbtn" aria-label="Float panel"><svg width="8" height="8" viewBox="0 0 8 8"><path d="M3 2V1h4.500v4H6M1 3h4.500v4H1z" fill="none" stroke="#fff"/></svg></button>
      <span class="flex-grow-1 text-center">Layers Panel</span>
    </div>
    <div class="paneltools d-flex align-items-center flex-shrink-0">
      <button class="btn tool" aria-label="Layer styling"><svg><use href="#p-brush"/></svg></button>
      <button class="btn tool" aria-label="Add group"><svg><use href="#p-group"/></svg></button>
      <button class="btn tool" aria-label="Manage visibility"><svg><use href="#p-eye"/></svg></button>
      <button class="btn tool" aria-label="Filter legend"><svg><use href="#p-filter"/></svg></button>
      <button class="btn tool drop" aria-label="Filter by expression"><svg><use href="#p-eps"/></svg></button>
      <button class="btn tool more ms-auto" aria-label="More">»</button>
    </div>
    <label class="d-flex align-items-center ps-4">
      <input type="checkbox" class="tick ms-1 me-2" checked aria-label="Layer visible">
      <span class="swatch ms-1 my-1 me-1"></span>
      <span class="layername ps-1 text-nowrap">Ne_50m_admin_0...</span>
    </label>
  </aside>

  <section class="map flex-grow-1 overflow-hidden">
    <svg class="d-block w-100 h-100" viewBox="248 95 1000 597" preserveAspectRatio="xMaxYMin slice" role="img" aria-label="Map of the Gulf of Guinea">
      <path class="coast" d="M398 94 405 98 412 101 420 106 427 112 436 119 440 121 451 126 461 134 470 143 480 152 490 160 505 168 520 175 528 178 534 180 542 176 550 172 560 168 575 162 590 159 604 158 601 156 608 158 620 155 634 154 648 157 655 158 653 152 657 156 668 159 676 163 690 167 698 163 710 156 722 150 735 145 750 140 770 139 778 136 778 132 790 129 803 126 818 124 842 122 848 117 852 118 846 121 860 121 873 123 882 129 889 136 893 142 902 142 896 145 903 147 904 150 896 149 900 151 900 154 902 160 905 168 913 177 921 181 924 181 925 177 926 180 933 179 934 176 936 179 939 178 940 169 942 178 947 177 951 174 949 170 953 172 959 173 961 171 964 174 983 173 982 164 986 167 988 169 990 173 992 174 993 171 999 173 1001 181 1004 187 1015 191 1017 188 1022 189 1019 193 1023 194 1020 197 1022 201 1026 207 1029 215 1027 227 1025 239 1024 251 1019 261 1014 271 1021 273 1021 286 1017 284 1012 286 1017 291 1023 296 1031 297 1026 301 1017 297 1012 294 1013 307 1009 316 1003 322 998 323 995 320 998 327 1002 335 1005 341 1012 341 1011 345 1016 347 1012 349 1008 346 1010 356 1016 357 1013 359 1020 368 1025 373 1033 376 1027 376 1037 385 1043 390 1050 400 1058 407 1063 414 1079 430 1083 438 1089 445 1093 455 1092 463 1098 471 1104 473 1112 469 1117 469 1112 473 1104 475 1096 476 1103 488 1111 499 1113 512 1120 527 1126 539 1126 549 1118 557 1116 558 1121 572 1126 587 1135 602 1140 615 1138 638 1133 652 1127 658 1116 664 1112 675 1103 684 1102 694H1260V85H398z"/>
      <g class="coast"><path d="M991 201 994 196 1000 196 1001 200 997 207 994 211 987 210 987 206 991 205zM931 295 934 291 938 292 939 296 935 300 932 300zM955 257 957 255 959 256 957 259zM339 527 340 526 341 527 340 528z"/></g>
      <g class="bord"><path d="M431 94 424 101 421 107M510 94 516 101 508 106 511 116 520 123 530 126 536 137 537 155 533 179M660 94 663 103 658 115 656 121 660 133 666 142 669 150 668 158M762 94 765 101 763 108 770 119 779 124 781 132M789 94 790 101 796 107 793 116 795 128M827 94 824 102 826 122"/>
      <path d="M990 170 992 163 997 155 1000 145 1002 137 1005 131 1014 123 1022 117 1028 110 1036 105 1041 107 1046 107 1049 103 1054 107 1059 113 1061 118 1066 120 1073 116 1076 108 1083 102 1081 94M1182 94 1177 103 1171 114 1166 125 1158 130 1157 133 1162 136 1162 153 1165 172 1174 182 1176 189 1174 191 1186 204 1195 212 1203 220 1206 239 1212 225 1215 216 1218 204 1233 202 1242 198 1250 200"/>
      <path d="M1026 240 1030 241H1069V274H1030L1021 272M1069 241V237H1100L1108 239 1122 239 1124 241H1160L1170 245 1190 247 1203 255 1205 247 1203 243 1206 239M1124 241 1121 252 1123 267 1141 262 1150 264 1157 278 1152 286 1147 288 1142 296 1141 308 1149 313 1158 320 1157 340 1155 355 1151 370 1148 373 1142 372 1137 364 1129 371 1115 369 1108 357 1104 355 1100 359V369L1091 371 1077 370 1075 382 1080 387 1079 393 1084 396 1082 402 1084 407H1078L1074 403 1068 405 1064 409V413"/>
      <path d="M1250 321 1239 329 1229 334 1218 352 1208 364 1206 395 1202 408 1197 414 1189 417 1175 430 1165 441 1156 440 1156 428 1152 425 1141 429 1137 429 1135 436 1127 440 1118 432 1110 428 1099 434 1088 445M1118 433 1101 446 1102 464H1093M1116 469 1211 469 1218 473 1221 481 1222 491 1227 501 1229 509 1245 532H1250"/></g>
    </svg>
  </section>
</main>

<footer class="status d-flex align-items-center flex-shrink-0 position-relative">
  <span class="me-auto text-nowrap">Toggles the editing state of the current layer</span>
  <label for="coord">Coordinate</label>
  <input id="coord" class="field coord ms-1 text-center" value="-16.39,7.15">
  <button class="boxbtn" aria-label="Toggle extents display"><svg width="18" height="18" viewBox="0 0 18 18"><g fill="none" stroke="#333" stroke-width="1.500"><ellipse cx="6" cy="5" rx="3" ry="4" transform="rotate(-35 6 5)"/><circle cx="11" cy="12" r="4.500"/><path d="m2 8 6 1M5 10l5 6M10 7l6-4M4 13l3 2M6 2l2 6M9 11h4M11 9v5"/></g></svg></button>
  <label for="scale" class="gap-before me-1">Scale</label>
  <select id="scale" class="field scale"><option>1:100</option></select>
  <button class="boxbtn" aria-label="Lock scale"><svg width="14" height="18" viewBox="0 0 14 18"><path d="M3.500 8V5q0-4 3.500-4t3.500 4v3" fill="none" stroke="#777" stroke-width="2"/><rect x="1" y="8" width="12" height="9" rx="2" fill="#555"/></svg></button>
  <label for="mag" class="gap-before me-1">Magnifier</label>
  <input id="mag" class="field mag" value="100%">
  <button class="step ms-1" aria-label="Step magnifier"><svg width="9" height="16" viewBox="0 0 9 16"><path d="m2 5 2.500-2.500L7 5M2 11l2.500 2.500L7 11" fill="none" stroke="#333" stroke-width="1.500"/></svg></button>
  <label for="rot" class="gap-before me-2">Rotation</label>
  <input id="rot" class="field rot" value="0.0">
  <button class="step ms-1" aria-label="Step rotation"><svg width="9" height="16" viewBox="0 0 9 16"><path d="m2 5 2.500-2.500L7 5M2 11l2.500 2.500L7 11" fill="none" stroke="#333" stroke-width="1.500"/></svg></button>
  <input id="render" type="checkbox" class="tick faint ms-2 me-1" checked>
  <label for="render">Render</label>
  <button class="chip crs ms-1 d-flex align-items-center"><svg width="16" height="16" viewBox="0 0 16 16" class="me-1"><circle cx="8" cy="8" r="7.500" fill="#333"/><circle cx="8" cy="8" r="4" fill="none" stroke="#ddd"/><path d="M8 0v16M0 8h16" stroke="#bbb"/><circle cx="8" cy="8" r="3" fill="#444"/></svg>EPSG:102014 (OTF)</button>
  <button class="chip msg ms-1 d-flex align-items-center" aria-label="Messages"><svg width="18" height="16" viewBox="0 0 18 16"><path d="M9 1c5 0 8 3 8 6.500 0 3-2 4-3 5l1 3-5-2c-6 0-9-2-9-6C1 4 4 1 9 1z" fill="#555"/><path d="M5 7.500h2M8 7.500h2M11 7.500h2" stroke="#eee" stroke-width="2"/></svg></button>
  <svg class="resize position-absolute" width="12" height="12" viewBox="0 0 12 12"><path d="M1 12 12 1M5 12l7-7M9 12l3-3" stroke="#888"/></svg>
</footer>
</body>
</html>
